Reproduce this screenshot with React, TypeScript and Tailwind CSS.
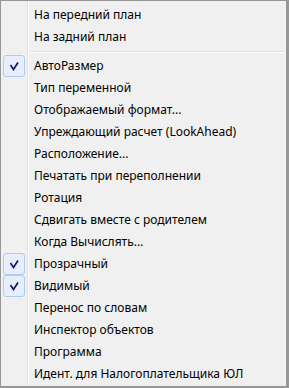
import React from "react";

type Item = { label: string; checked?: boolean } | "sep";

const items: Item[] = [
  { label: "На передний план" },
  { label: "На задний план" },
  "sep",
  { label: "АвтоРазмер", checked: true },
  { label: "Тип переменной" },
  { label: "Отображаемый формат..." },
  { label: "Упреждающий расчет (LookAhead)" },
  { label: "Расположение..." },
  { label: "Печатать при переполнении" },
  { label: "Ротация" },
  { label: "Сдвигать вместе с родителем" },
  { label: "Когда Вычислять..." },
  { label: "Прозрачный", checked: true },
  { label: "Видимый", checked: true },
  { label: "Перенос по словам" },
  { label: "Инспектор объектов" },
  { label: "Программа" },
  { label: "Идент. для Налогоплательщика ЮЛ" },
];

function Check() {
  return (
    <div className="w-[22px] h-[22px] rounded-[3px] border border-[#aecbf0] bg-[#e6eefb] flex items-center justify-center">
      <svg width="10" height="10" viewBox="0 0 10 10">
        <path d="M1.5 4 L4.5 8.5 L9 1.5" fill="none" stroke="#13186f" strokeWidth="1.7" />
      </svg>
    </div>
  );
}

export default function App() {
  return (
    <div
      className="relative w-[289px] h-[388px] bg-[#f0f0f0] border-l border-t border-r-[3px] border-b-2 border-[#979797] pt-[3px] text-[12px] text-black"
      style={{ fontFamily: '"Noto Sans", "DejaVu Sans", sans-serif' }}
    >
      {/* gutter line */}
      <div className="absolute left-[26px] top-0 bottom-0 w-[2px] border-l border-[#e2e3e3] border-r border-r-white" />
      {items.map((it, i) =>
        it === "sep" ? (
          <div key={i} className="h-[7px] flex items-center pl-[29px] pr-[1px]">
            <div className="w-full h-[2px] border-t border-[#e0e0e0] border-b border-b-white" />
          </div>
        ) : (
          <div key={i} className="h-[22px] flex items-center">
            <div className="w-[33px] pl-[2px] flex items-center">{it.checked && <Check />}</div>
            <span className="leading-none whitespace-nowrap">{it.label}</span>
          </div>
        )
      )}
    </div>
  );
}
